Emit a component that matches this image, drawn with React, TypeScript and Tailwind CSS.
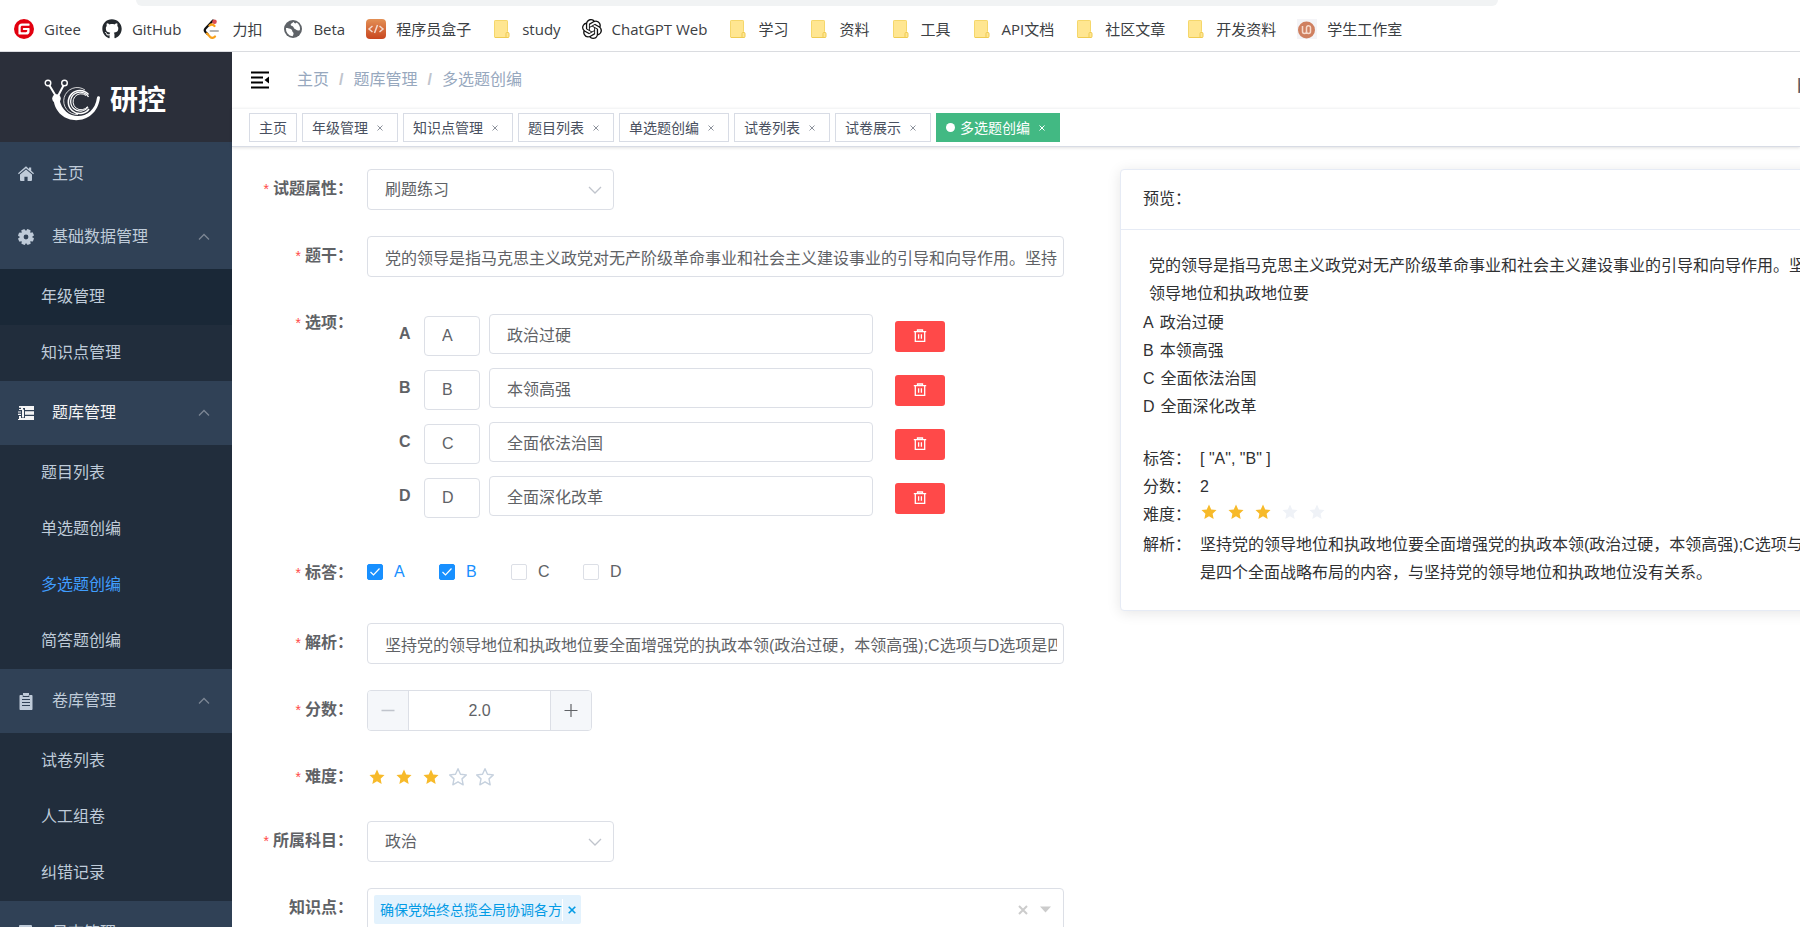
import { useState } from "react";
import type { ReactNode } from "react";
import { SiGitee, SiOpenai } from "react-icons/si";
import { FaGithub } from "react-icons/fa";

/* ---------- icons ---------- */

function FolderIcon() {
  return (
    <svg width="20" height="20" viewBox="0 0 20 20" aria-hidden="true">
      <path d="M2 2.500a1.500 1.500 0 0 1 1.500-1.500h11a1.500 1.500 0 0 1 1.500 1.500v10.500l1 1v3.500a1.500 1.500 0 0 1-1.500 1.500h-12a1.500 1.500 0 0 1-1.500-1.500z" fill="#ffe691" />
      <path d="M2.500 18.200V2.500a1 1 0 0 1 1-1h11a1 1 0 0 1 1 1v10" fill="none" stroke="#f5d76b" />
      <path d="M3 18.500h13a1 1 0 0 0 1-1v-3a1 1 0 0 0-1-1h-1a1 1 0 0 0-1 1v4" fill="none" stroke="#efcb52" />
    </svg>
  );
}

function GlobeIcon() {
  return (
    <svg width="20" height="20" viewBox="0 0 20 20" aria-hidden="true">
      <circle cx="10" cy="10" r="9" fill="#5f6368" />
      <path d="M3 9c2 0 4 .5 5.500 1.500 1 .8.5 2 1.500 2.800s.5 2.700-.5 3.900A7.300 7.300 0 0 1 3 9z" fill="#fff" />
      <path d="M10.500 2.700c-.5 1.500-2.800 1.300-2.800 2.900s1.300 1.200 2.300 2 .5 2 2 2.400 1.500 1.500 3 1.500 1.500 0 2-1A7.300 7.300 0 0 0 13.500 3.600c-.5 1-1.800 1.400-3-.9z" fill="#fff" />
    </svg>
  );
}

function CodeBoxIcon() {
  return (
    <svg width="20" height="20" viewBox="0 0 20 20" aria-hidden="true">
      <defs>
        <linearGradient id="codebox" x1="0" y1="0" x2="0" y2="1">
          <stop offset="0" stopColor="#e39055" />
          <stop offset="1" stopColor="#c8461f" />
        </linearGradient>
      </defs>
      <rect width="20" height="20" rx="4" fill="url(#codebox)" />
      <path d="M6.500 7 3 10l3.500 3M13.500 7 17 10l-3.500 3M11.500 6 8.500 14" fill="none" stroke="#f3d9cd" strokeWidth="1.500" />
    </svg>
  );
}

function StudioIcon() {
  return (
    <svg width="20" height="20" viewBox="0 0 20 20" aria-hidden="true">
      <rect width="20" height="20" fill="#f4f4f7" />
      <circle cx="9.500" cy="11" r="8.500" fill="#cf8060" />
      <path d="M5.500 7v5.500a2 2 0 0 0 4 0V9M9.500 12.500a2 2 0 0 0 4 0V8.500a2 2 0 0 0-4 .5" fill="none" stroke="#f6d9cb" strokeWidth="1.500" />
    </svg>
  );
}

function LeetCodeIcon() {
  return (
    <svg width="20" height="20" viewBox="0 0 20 20" fill="none" strokeLinecap="round" aria-hidden="true">
      <path d="M11 1.500 3.500 9.500c-1 1.200-1 2.400 0 3.500l2 2" stroke="#111" strokeWidth="2.200" />
      <path d="M5 14.500 8 17.800c1.500 1.300 3.500 1.300 5-.3M7.500 6.500c1.800-1.500 3.500-1.300 5 .5" stroke="#f9a11b" strokeWidth="2.200" />
      <path d="M8.500 12h7.500" stroke="#b3b3b3" strokeWidth="2" />
      <circle cx="12.500" cy="2.800" r="2.300" fill="#dd4c4f" />
    </svg>
  );
}

function SnailLogo() {
  return (
    <svg width="58" height="46" viewBox="0 0 58 46" fill="none" stroke="#fff" aria-hidden="true">
      <circle cx="4" cy="5" r="2.800" strokeWidth="1.400" />
      <circle cx="20.500" cy="5" r="2.800" strokeWidth="1.400" />
      <path d="M5.500 7.500 13 20M19.500 7.500 13 20" strokeWidth="2" />
      <circle cx="12.500" cy="20.500" r="4.300" fill="#fff" stroke="none" />
      <path d="M9.500 21c2.500 28 43 29 46.500-1.500-.3-1.700-2.600-1.700-3 0C50 44 19 44 15.500 21z" fill="#fff" stroke="none" />
      <path d="M44.500 16.500a11.500 11.500 0 1 0 .5 14.500" strokeWidth="1.600" />
      <path d="M44.500 19a9.500 9.500 0 1 0-.5 10" strokeWidth="1.300" />
      <path d="M42 17.500a8 8 0 1 0 1.500 11" strokeWidth="1" />
      <path d="M41 12a13.500 13.500 0 1 0-7 24.500" strokeWidth=".8" />
    </svg>
  );
}

function HomeIcon() {
  return (
    <svg width="16" height="16" viewBox="0 0 16 16" fill="currentColor" aria-hidden="true">
      <path d="M8 .3 11 2.900V1.500h2.200v3.300L16 7.200l-.8 1L8 2.200.8 8.200 0 7.200z" />
      <path d="M8 3.400 14 8.400V14a1 1 0 0 1-1 1H9.600v-4.200H6.400V15H3a1 1 0 0 1-1-1V8.400z" />
    </svg>
  );
}

function GearIcon() {
  return (
    <svg width="16" height="16" viewBox="0 0 16 16" fill="currentColor" aria-hidden="true">
      <circle cx="8" cy="8" r="4.400" fill="none" stroke="currentColor" strokeWidth="4" />
      {[22, 67, 112, 157].map((deg) => (
        <rect key={deg} x="6" y="0" width="4" height="3.500" rx="1" transform={`rotate(${deg} 8 8)`} />
      ))}
      {[202, 247, 292, 337].map((deg) => (
        <rect key={deg} x="6" y="0" width="4" height="3.500" rx="1" transform={`rotate(${deg} 8 8)`} />
      ))}
    </svg>
  );
}

function BankIcon() {
  return (
    <svg width="16" height="16" viewBox="0 0 16 16" fill="currentColor" aria-hidden="true">
      <path d="M1 1h15v4H7V3H5v2H1V4h2V2.800H1zM0 6.500h3v1H0zM7 6.300h9v3.500H7zM0 8.800h3V10H0zM4 4.500h2v8H4zM1 11h2v2h4v-2h9v4H0v-1h1z" />
    </svg>
  );
}

function ClipboardIcon() {
  return (
    <svg width="16" height="17" viewBox="0 0 16 17" aria-hidden="true">
      <path d="M2.500 2H5V0h6v2h2.500c.6 0 1 .4 1 1v13c0 .6-.4 1-1 1h-11c-.6 0-1-.4-1-1V3c0-.6.4-1 1-1z" fill="currentColor" />
      <path d="M5 2.500v1h6v-1M4 6.500h8M4 9.500h8M4 12.500h8" stroke="#304156" fill="none" />
    </svg>
  );
}

function LogIcon() {
  return (
    <svg width="16" height="16" viewBox="0 0 16 16" aria-hidden="true">
      <rect x="1" width="13" height="16" rx="1" fill="currentColor" />
      <path d="M4 5h7M4 8h7M4 11h5" stroke="#304156" />
    </svg>
  );
}

function HamburgerIcon() {
  return (
    <svg width="18" height="18" viewBox="0 0 18 18" aria-hidden="true">
      <path d="M0 1.500h18M0 6.500h12M0 11.500h12M0 16.500h18" stroke="#000" strokeWidth="1.800" />
      <path d="M18 5.500v7L13.500 9z" fill="#000" />
    </svg>
  );
}

function Chevron({ up, className }: { up?: boolean; className?: string }) {
  return (
    <svg width="14" height="14" viewBox="0 0 14 14" fill="none" stroke="currentColor" strokeWidth="1.300" className={className} aria-hidden="true">
      <path d={up ? "M2 9.500 7 4.500l5 5" : "M1 4l6 6 6-6"} />
    </svg>
  );
}

function TrashIcon() {
  return (
    <svg width="14" height="14" viewBox="0 0 14 14" fill="none" stroke="#fff" strokeWidth="1.300" aria-hidden="true">
      <path d="M.8 2.600h12.400M4.500 2.500V1h5v1.500M2.300 3v9.400h9.400V3M5.600 5.300v4.500M8.400 5.300v4.500" />
    </svg>
  );
}

const STAR = "M8.500 1.500l2.100 4.600 5 .6-3.700 3.400 1 5-4.400-2.500-4.400 2.500 1-5L1.400 6.700l5-.6z";

function Star({ kind }: { kind: "on" | "outline" | "void" }) {
  if (kind === "outline") {
    return (
      <svg width="20" height="20" viewBox="0 0 17 17" aria-hidden="true">
        <path d={STAR} fill="none" stroke="#c6d1de" strokeWidth="1.200" strokeLinejoin="round" />
      </svg>
    );
  }
  return (
    <svg width="18" height="18" viewBox="0 0 17 17" aria-hidden="true">
      <path d={STAR} fill={kind === "on" ? "#f7ba2a" : "#eff2f7"} />
    </svg>
  );
}

/* ---------- browser bookmarks ---------- */

const bookmarks: { label: string; icon: ReactNode }[] = [
  { label: "Gitee", icon: <SiGitee size={20} color="#e2000f" /> },
  { label: "GitHub", icon: <FaGithub size={20} color="#24292e" /> },
  { label: "力扣", icon: <LeetCodeIcon /> },
  { label: "Beta", icon: <GlobeIcon /> },
  { label: "程序员盒子", icon: <CodeBoxIcon /> },
  { label: "study", icon: <FolderIcon /> },
  { label: "ChatGPT Web", icon: <SiOpenai size={20} color="#111" /> },
  { label: "学习", icon: <FolderIcon /> },
  { label: "资料", icon: <FolderIcon /> },
  { label: "工具", icon: <FolderIcon /> },
  { label: "API文档", icon: <FolderIcon /> },
  { label: "社区文章", icon: <FolderIcon /> },
  { label: "开发资料", icon: <FolderIcon /> },
  { label: "学生工作室", icon: <StudioIcon /> },
];

function BookmarkBar() {
  return (
    <div className="flex h-[52px] shrink-0 flex-col border-b border-[#dadce0] bg-white">
      <div className="mr-[302px] ml-[136px] h-[6px] rounded-b-[14px] bg-[#f1f3f4]" />
      <nav aria-label="书签" className="flex flex-1 items-center gap-[21px] overflow-hidden pl-[14px] font-['Open_Sans','Noto_Sans_CJK_SC',sans-serif] text-[15px] leading-5 text-[#3c4043]">
        {bookmarks.map((b) => (
          <a key={b.label} href="#" className="flex shrink-0 items-center gap-[10px] whitespace-nowrap">
            {b.icon}
            {b.label}
          </a>
        ))}
      </nav>
    </div>
  );
}

/* ---------- sidebar ---------- */

const groups = [
  { label: "基础数据管理", icon: <GearIcon />, active: false, items: ["年级管理", "知识点管理"] },
  { label: "题库管理", icon: <BankIcon />, active: true, items: ["题目列表", "单选题创编", "多选题创编", "简答题创编"] },
  { label: "卷库管理", icon: <ClipboardIcon />, active: false, items: ["试卷列表", "人工组卷", "纠错记录"] },
  { label: "日志管理", icon: <LogIcon />, active: false, items: [] as string[] },
];

function Sidebar() {
  return (
    <aside className="flex w-[232px] shrink-0 flex-col overflow-hidden bg-[#304156] text-[#bfcbd9]">
      <div className="flex h-[90px] shrink-0 items-center gap-2 bg-[#2b2f3a] pt-2 pl-[44px] text-[28px] leading-8 font-bold text-white">
        <SnailLogo />
        研控
      </div>
      <a href="#" className="flex h-[63px] shrink-0 items-center gap-[18px] pl-[18px]">
        <HomeIcon />
        主页
      </a>
      {groups.map((g) => (
        <div key={g.label} className="shrink-0">
          <button type="button" className={`flex h-16 w-full items-center gap-[18px] pr-[21px] pl-[18px] ${g.active ? "text-[#f4f4f5]" : ""}`}>
            {g.icon}
            {g.label}
            <Chevron up className="ml-auto text-[#7c8694]" />
          </button>
          {g.items.map((item) => (
            <a
              key={item}
              href="#"
              className={`flex h-14 items-center pl-[41px] ${item === "年级管理" ? "bg-[#1a2837]" : "bg-[#212d3c]"} ${item === "多选题创编" ? "text-[#409eff]" : ""}`}
            >
              {item}
            </a>
          ))}
        </div>
      ))}
    </aside>
  );
}

/* ---------- top bars ---------- */

function TopBar() {
  return (
    <header className="flex h-14 shrink-0 items-center pl-[19px] text-[#97a8be]">
      <button type="button" aria-label="折叠菜单" className="mr-[28px]">
        <HamburgerIcon />
      </button>
      <nav aria-label="面包屑" className="flex items-center gap-[10px]">
        <a href="#">主页</a>
        <span className="font-bold text-[#c0c4cc]">/</span>
        <a href="#">题库管理</a>
        <span className="font-bold text-[#c0c4cc]">/</span>
        <span>多选题创编</span>
      </nav>
      <div className="ml-auto w-[3px] overflow-hidden pt-3 text-xl leading-6 text-[#5a5e66]">b</div>
    </header>
  );
}

const tabs = ["主页", "年级管理", "知识点管理", "题目列表", "单选题创编", "试卷列表", "试卷展示", "多选题创编"];

function TagBar() {
  return (
    <div className="z-10 flex h-[39px] shrink-0 gap-[5px] border-t border-b border-t-[#f4f5f6] border-b-[#d8dce5] pt-1 pl-[17px] text-sm leading-none text-[#495060] shadow-[0_1px_3px_0_rgba(0,0,0,0.12)]">
      {tabs.map((t, i) => {
        const active = i === tabs.length - 1;
        return (
          <div
            key={t}
            className={`flex h-[29px] shrink-0 items-center border px-[9px] ${active ? "border-[#42b983] bg-[#42b983] text-white" : "border-[#d8dce5] bg-white"}`}
          >
            {active && <span className="mr-[5px] size-[9px] rounded-full bg-white" />}
            <a href="#">{t}</a>
            {i > 0 && (
              <button type="button" aria-label={`关闭 ${t}`} className={`flex w-5 items-center justify-center pl-1 ${active ? "text-white" : "text-[#8d929c]"}`}>
                <svg width="6" height="6" viewBox="0 0 6 6" stroke="currentColor" aria-hidden="true">
                  <path d="M.5.5l5 5M5.500.5l-5 5" />
                </svg>
              </button>
            )}
          </div>
        );
      })}
    </div>
  );
}

/* ---------- form ---------- */

const STEM = "党的领导是指马克思主义政党对无产阶级革命事业和社会主义建设事业的引导和向导作用。坚持党的领导地位和执政地位要";
const ANALYSIS = "坚持党的领导地位和执政地位要全面增强党的执政本领(政治过硬，本领高强);C选项与D选项是四个全面战略布局的内容，与坚持党的领导地位和执政地位没有关系。";
const options = [
  { key: "A", text: "政治过硬" },
  { key: "B", text: "本领高强" },
  { key: "C", text: "全面依法治国" },
  { key: "D", text: "全面深化改革" },
];

function Row({ label, htmlFor, required = true, children }: { label: string; htmlFor?: string; required?: boolean; children: ReactNode }) {
  return (
    <div className="flex">
      <label htmlFor={htmlFor} className="mr-[14px] -mb-[2px] flex h-10 w-[121px] shrink-0 items-center justify-end gap-1 font-bold">
        {required && <span className="text-sm font-normal text-[#ff4949]">*</span>}
        {label}：
      </label>
      <div className="min-w-0 flex-1">{children}</div>
    </div>
  );
}

function SelectBox({ id, value }: { id: string; value: string }) {
  return (
    <div className="grid w-[247px] items-center">
      <select id={id} defaultValue={value} className="col-start-1 row-start-1 h-[41px] appearance-none rounded border border-[#dcdfe6] bg-white pr-9 pl-[17px]">
        <option>{value}</option>
      </select>
      <Chevron className="pointer-events-none col-start-1 row-start-1 mr-3 justify-self-end text-[#c0c4cc]" />
    </div>
  );
}

function CheckItem({ name, initial }: { name: string; initial: boolean }) {
  const [on, setOn] = useState(initial);
  return (
    <label className={`flex items-center gap-[11px] ${on ? "text-[#1890ff]" : ""}`}>
      <span className="grid size-4 place-items-center">
        <input
          type="checkbox"
          checked={on}
          onChange={() => setOn(!on)}
          className="col-start-1 row-start-1 size-4 appearance-none rounded-[2px] border border-[#dcdfe6] bg-white checked:border-[#1890ff] checked:bg-[#1890ff]"
        />
        {on && (
          <svg width="10" height="8" viewBox="0 0 10 8" fill="none" stroke="#fff" strokeWidth="1.200" className="pointer-events-none col-start-1 row-start-1" aria-hidden="true">
            <path d="M.5 4l3 3 6-6.500" />
          </svg>
        )}
      </span>
      <span className="w-3">{name}</span>
    </label>
  );
}

const inputClass = "h-[41px] w-full rounded border border-[#dcdfe6] bg-white pr-[6px] pl-[17px]";

function QuestionForm() {
  const [score, setScore] = useState(2);
  const [rate, setRate] = useState(3);
  return (
    <form className="flex w-[832px] shrink-0 flex-col gap-[26px] text-[#606266]">
      <Row label="试题属性" htmlFor="attr">
        <SelectBox id="attr" value="刷题练习" />
      </Row>
      <Row label="题干" htmlFor="stem">
        <input id="stem" type="text" defaultValue={STEM} className={inputClass} />
      </Row>
      <Row label="选项">
        <div className="flex flex-col gap-[13px] pt-[11px] pb-[10px]">
          {options.map((o) => (
            <div key={o.key} className="flex h-[41px] items-start">
              <span className="mt-2 ml-8 w-[25px] leading-6 font-bold">{o.key}</span>
              <input type="text" aria-label={`选项 ${o.key} 前缀`} defaultValue={o.key} className="mt-[2px] mr-[9px] h-10 w-14 rounded border border-[#dcdfe6] pl-[17px]" />
              <input type="text" aria-label={`选项 ${o.key} 内容`} defaultValue={o.text} className="mr-[22px] h-10 w-96 rounded border border-[#dcdfe6] pl-[17px]" />
              <button type="button" aria-label={`删除选项 ${o.key}`} className="mt-[7px] flex h-[31px] w-[50px] items-center justify-center rounded-[3px] bg-[#ff4949] pb-[2px]">
                <TrashIcon />
              </button>
            </div>
          ))}
        </div>
      </Row>
      <Row label="标答">
        <div className="mb-[6px] flex h-[38px] items-center gap-[33px]">
          {options.map((o) => (
            <CheckItem key={o.key} name={o.key} initial={o.key === "A" || o.key === "B"} />
          ))}
        </div>
      </Row>
      <Row label="解析" htmlFor="analysis">
        <input id="analysis" type="text" defaultValue={ANALYSIS} className={inputClass} />
      </Row>
      <Row label="分数" htmlFor="score">
        <div className="flex h-[41px] w-[225px] overflow-hidden rounded border border-[#dcdfe6]">
          <button type="button" aria-label="减少" onClick={() => setScore(score - 1)} className="flex w-[41px] items-center justify-center border-r border-[#dcdfe6] bg-[#f5f7fa]">
            <svg width="14" height="14" viewBox="0 0 14 14" stroke="#c0c4cc" strokeWidth="1.300" aria-hidden="true">
              <path d="M.5 6.500h13" />
            </svg>
          </button>
          <input
            id="score"
            type="text"
            value={score.toFixed(1)}
            onChange={(e) => setScore(Number(e.target.value) || 0)}
            className="min-w-0 flex-1 text-center"
          />
          <button type="button" aria-label="增加" onClick={() => setScore(score + 1)} className="flex w-[41px] items-center justify-center border-l border-[#dcdfe6] bg-[#f5f7fa]">
            <svg width="14" height="14" viewBox="0 0 14 14" stroke="#606266" strokeWidth="1.200" aria-hidden="true">
              <path d="M.5 6.500h13M7 0v13" />
            </svg>
          </button>
        </div>
      </Row>
      <Row label="难度">
        <div className="flex h-[38px] items-center pt-[2px]">
          {[1, 2, 3, 4, 5].map((n) => (
            <button key={n} type="button" aria-label={`${n} 星`} onClick={() => setRate(n)} className="flex w-[27px] justify-start">
              <span className="flex w-5 justify-center">
                <Star kind={n <= rate ? "on" : "outline"} />
              </span>
            </button>
          ))}
        </div>
      </Row>
      <Row label="所属科目" htmlFor="subject">
        <SelectBox id="subject" value="政治" />
      </Row>
      <Row label="知识点" required={false}>
        <div className="flex h-[43px] items-center rounded border border-[#dcdfe6] pr-3 pl-[6px]">
          <span className="flex h-[29px] items-center rounded-[2px] bg-[#e3f2fd] pl-[6px] text-sm text-[#039be5]">
            确保党始终总揽全局协调各方
            <button type="button" aria-label="移除知识点" className="flex h-[22px] w-[19px] items-center justify-center border-l border-white">
              <svg width="8" height="8" viewBox="0 0 8 8" stroke="currentColor" strokeWidth="1.600" aria-hidden="true">
                <path d="M.7.7l6.600 6.600M7.300.7.7 7.300" />
              </svg>
            </button>
          </span>
          <button type="button" aria-label="清空" className="mr-3 ml-auto">
            <svg width="10" height="10" viewBox="0 0 10 10" stroke="#ccc" strokeWidth="2" aria-hidden="true">
              <path d="M1 1l8 8M9 1 1 9" />
            </svg>
          </button>
          <button type="button" aria-label="展开">
            <svg width="11" height="7" viewBox="0 0 11 7" fill="#ccc" aria-hidden="true">
              <path d="M0 .5h11L5.500 6.500z" />
            </svg>
          </button>
        </div>
      </Row>
    </form>
  );
}

/* ---------- preview ---------- */

function Field({ label, children }: { label: string; children: ReactNode }) {
  return (
    <div className="flex">
      <dt className="w-[57px] shrink-0">{label}：</dt>
      <dd className="min-w-0 flex-1">{children}</dd>
    </div>
  );
}

function Preview() {
  return (
    <section className="w-[760px] shrink-0 self-start rounded border border-[#e6ebf5] bg-white text-[#303133] shadow-[0_2px_14px_0_rgba(0,0,0,0.1)]">
      <h2 className="flex h-[60px] items-center border-b border-[#e6ebf5] px-[22px] pb-[2px]">预览：</h2>
      <div className="px-[22px] pt-[22px] pb-[23px] leading-7">
        <p className="mb-px pl-[6px]">{STEM}</p>
        {options.map((o) => (
          <div key={o.key} className="flex gap-[6px]">
            <span>{o.key}</span>
            <span>{o.text}</span>
          </div>
        ))}
        <dl className="mt-6">
          <Field label="标答">[ "A", "B" ]</Field>
          <Field label="分数">2</Field>
          <Field label="难度">
            <div className="mb-[9px] flex h-[21px] items-center gap-[9px]">
              {[1, 2, 3, 4, 5].map((n) => (
                <Star key={n} kind={n <= 3 ? "on" : "void"} />
              ))}
            </div>
          </Field>
          <Field label="解析">{ANALYSIS}</Field>
        </dl>
      </div>
    </section>
  );
}

export default function App() {
  return (
    <div className="flex h-screen flex-col overflow-hidden bg-white font-['Liberation_Sans','Noto_Sans_CJK_SC',sans-serif] text-base leading-6">
      <BookmarkBar />
      <div className="flex min-h-0 flex-1">
        <Sidebar />
        <div className="flex min-w-0 flex-1 flex-col">
          <TopBar />
          <TagBar />
          <main className="flex min-h-0 flex-1 gap-14 overflow-hidden pt-[22px]">
            <QuestionForm />
            <Preview />
          </main>
        </div>
      </div>
    </div>
  );
}
